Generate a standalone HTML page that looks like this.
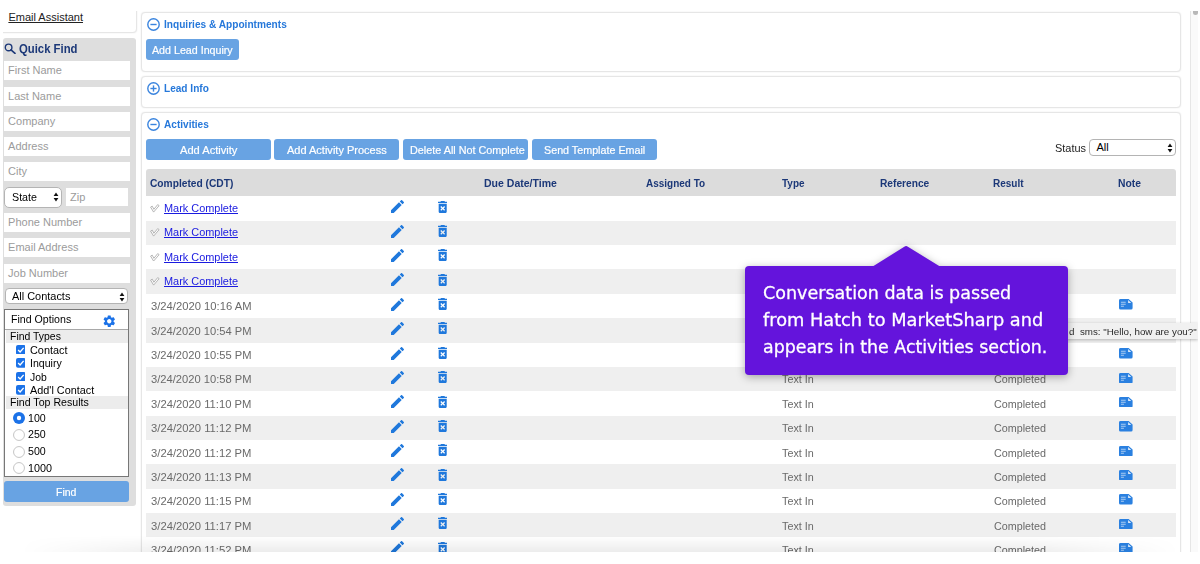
<!DOCTYPE html>
<html><head><meta charset="utf-8"><title>Activities</title>
<style>
html,body{margin:0;padding:0;background:#fff;}
body{width:1200px;height:564px;position:relative;overflow:hidden;font-family:"Liberation Sans",sans-serif;font-size:11px;color:#000;}
.abs{position:absolute;}
.t{position:absolute;white-space:nowrap;line-height:14px;font-size:11px;}
.card{position:absolute;background:#fff;border:1px solid #e6e6e6;border-radius:4px;box-shadow:0 0 1.5px rgba(0,0,0,0.10);box-sizing:border-box;}
.btn{position:absolute;background:#68a3e3;color:#fff;border-radius:3px;-webkit-text-stroke:0.2px #fff;padding-top:0.5px;text-align:center;font-size:11px;line-height:21px;height:21px;white-space:nowrap;}
.inp{position:absolute;background:#fff;height:19px;left:4.4px;width:125.7px;box-sizing:border-box;color:#9b9b9b;font-size:11px;line-height:19px;padding-left:3.7px;white-space:nowrap;}
.bt{color:#fff;font-size:11px;-webkit-text-stroke:0.2px #fff;}
.sec{color:#2678da;font-weight:bold;font-size:11px;}
.th{color:#1c3878;font-weight:bold;font-size:11px;}
.td{color:#6a6a6a;font-size:11px;}
.lnk{color:#1a1ae0;text-decoration:underline;font-size:11px;}
.row{position:absolute;left:146.3px;width:1029.7px;}
.sel{position:absolute;background:#fff;border:1px solid #b4b4b4;border-radius:4px;box-sizing:border-box;font-size:11px;}
</style></head><body>

<div class="card" style="left:-4px;top:-4px;width:140.5px;height:36.5px;"></div>
<div class="t " style="left:8.4px;top:9.6px;text-decoration:underline;color:#222;">Email Assistant</div>
<div class="abs" style="left:3px;top:38px;width:133.3px;height:467.8px;background:#dedede;border-radius:3px;"></div>
<svg class="abs" style="left:4.3px;top:42.8px" width="12" height="11" viewBox="0 0 12 11"><circle cx="4.6" cy="4.4" r="3.3" fill="none" stroke="#1c3878" stroke-width="1.4"/><path d="M7 6.8 L11 10.4" stroke="#1c3878" stroke-width="1.6" stroke-linecap="round"/></svg>
<div class="t " style="left:19.2px;top:41.0px;font-weight:bold;font-size:13px;line-height:16px;color:#1c3878;transform:scaleX(0.8709);transform-origin:0 0;">Quick Find</div>
<div class="inp" style="top:61.25px;">First Name</div>
<div class="inp" style="top:86.55px;">Last Name</div>
<div class="inp" style="top:111.85px;">Company</div>
<div class="inp" style="top:137.15px;">Address</div>
<div class="inp" style="top:162.45px;">City</div>
<div class="sel" style="left:4.3px;top:187.15px;width:58px;height:20.4px;border-radius:5px;"></div>
<div class="t " style="left:11.8px;top:189.95px;color:#000;transform:scaleX(0.9732);transform-origin:0 0;">State</div>
<svg class="abs" style="left:52.8px;top:192.35px" width="6" height="10" viewBox="0 0 6 10"><path d="M3 0.5 L5.4 4 H0.6Z M3 9.5 L5.4 6 H0.6Z" fill="#111"/></svg>
<div class="inp" style="left:66.3px;width:61.7px;top:188.25px;height:18px;line-height:18px;">Zip</div>
<div class="inp" style="top:213.05px;">Phone Number</div>
<div class="inp" style="top:238.35px;">Email Address</div>
<div class="inp" style="top:263.65px;">Job Number</div>
<div class="sel" style="left:4.5px;top:288.3px;width:123.5px;height:16px;"></div>
<div class="t " style="left:11.8px;top:288.8px;transform:scaleX(0.9948);transform-origin:0 0;">All Contacts</div>
<svg class="abs" style="left:118.5px;top:291.5px" width="6" height="10" viewBox="0 0 6 10"><path d="M3 0.5 L5.4 4 H0.6Z M3 9.5 L5.4 6 H0.6Z" fill="#111"/></svg>
<div class="abs" style="left:4.3px;top:308.7px;width:124.8px;height:168.4px;background:#fff;border:1px solid #777;box-sizing:border-box;"></div>
<div class="t " style="left:10.6px;top:312.2px;transform:scaleX(0.9651);transform-origin:0 0;">Find Options</div>
<div class="abs" style="left:5.3px;top:328.6px;width:122.8px;height:1px;background:#a8a8a8;"></div>
<div class="abs" style="left:5.5px;top:329.5px;width:122.5px;height:13px;background:#ececec;"></div>
<div class="t " style="left:9.7px;top:329px;transform:scaleX(0.9495);transform-origin:0 0;">Find Types</div>
<svg class="abs" style="left:15.6px;top:344.6px" width="9.8" height="9.8" viewBox="0 0 10 10"><rect width="10" height="10" rx="2" fill="#1b72e8"/><path d="M2.2 5.2 L4.2 7.2 L7.8 2.9" stroke="#fff" stroke-width="1.4" fill="none"/></svg>
<div class="t " style="left:29.5px;top:342.5px;transform:scaleX(0.9889);transform-origin:0 0;">Contact</div>
<svg class="abs" style="left:15.6px;top:358.1px" width="9.8" height="9.8" viewBox="0 0 10 10"><rect width="10" height="10" rx="2" fill="#1b72e8"/><path d="M2.2 5.2 L4.2 7.2 L7.8 2.9" stroke="#fff" stroke-width="1.4" fill="none"/></svg>
<div class="t " style="left:29.5px;top:356.0px;transform:scaleX(0.9612);transform-origin:0 0;">Inquiry</div>
<svg class="abs" style="left:15.6px;top:371.6px" width="9.8" height="9.8" viewBox="0 0 10 10"><rect width="10" height="10" rx="2" fill="#1b72e8"/><path d="M2.2 5.2 L4.2 7.2 L7.8 2.9" stroke="#fff" stroke-width="1.4" fill="none"/></svg>
<div class="t " style="left:29.5px;top:369.5px;transform:scaleX(0.9437);transform-origin:0 0;">Job</div>
<svg class="abs" style="left:15.6px;top:385.1px" width="9.8" height="9.8" viewBox="0 0 10 10"><rect width="10" height="10" rx="2" fill="#1b72e8"/><path d="M2.2 5.2 L4.2 7.2 L7.8 2.9" stroke="#fff" stroke-width="1.4" fill="none"/></svg>
<div class="t " style="left:29.5px;top:383.0px;transform:scaleX(0.9870);transform-origin:0 0;">Add'l Contact</div>
<div class="abs" style="left:5.5px;top:395.8px;width:122.5px;height:13.2px;background:#ececec;"></div>
<div class="t " style="left:9.7px;top:395.3px;transform:scaleX(0.9635);transform-origin:0 0;">Find Top Results</div>
<svg class="abs" style="left:13.2px;top:411.75px" width="12" height="12" viewBox="0 0 11 11"><circle cx="5.5" cy="5.5" r="5.5" fill="#1b72e8"/><circle cx="5.5" cy="5.5" r="2" fill="#fff"/></svg>
<div class="t " style="left:27.6px;top:410.55px;transform:scaleX(0.9668);transform-origin:0 0;">100</div>
<svg class="abs" style="left:13.2px;top:428.65px" width="12" height="12" viewBox="0 0 11 11"><circle cx="5.5" cy="5.5" r="5" fill="#fff" stroke="#c4c4c4" stroke-width="0.9"/></svg>
<div class="t " style="left:27.6px;top:427.45px;transform:scaleX(0.9668);transform-origin:0 0;">250</div>
<svg class="abs" style="left:13.2px;top:445.55px" width="12" height="12" viewBox="0 0 11 11"><circle cx="5.5" cy="5.5" r="5" fill="#fff" stroke="#c4c4c4" stroke-width="0.9"/></svg>
<div class="t " style="left:27.6px;top:444.35px;transform:scaleX(0.9668);transform-origin:0 0;">500</div>
<svg class="abs" style="left:13.2px;top:462.45px" width="12" height="12" viewBox="0 0 11 11"><circle cx="5.5" cy="5.5" r="5" fill="#fff" stroke="#c4c4c4" stroke-width="0.9"/></svg>
<div class="t " style="left:27.6px;top:461.25px;transform:scaleX(0.9802);transform-origin:0 0;">1000</div>
<svg class="abs" style="left:102.3px;top:313.5px" width="14.5" height="14.5" viewBox="0 0 24 24"><path fill="#1b72e8" d="M19.14 12.94c.04-.3.06-.61.06-.94 0-.32-.02-.64-.07-.94l2.03-1.58a.49.49 0 0 0 .12-.61l-1.92-3.32a.488.488 0 0 0-.59-.22l-2.39.96c-.5-.38-1.03-.7-1.62-.94l-.36-2.54a.484.484 0 0 0-.48-.41h-3.84c-.24 0-.43.17-.47.41l-.36 2.54c-.59.24-1.13.57-1.62.94l-2.39-.96c-.22-.08-.47 0-.59.22L2.74 8.87c-.12.21-.08.47.12.61l2.03 1.58c-.05.3-.09.63-.09.94s.02.64.07.94l-2.03 1.58a.49.49 0 0 0-.12.61l1.92 3.32c.12.22.37.29.59.22l2.39-.96c.5.38 1.03.7 1.62.94l.36 2.54c.05.24.24.41.48.41h3.84c.24 0 .44-.17.47-.41l.36-2.54c.59-.24 1.13-.56 1.62-.94l2.39.96c.22.08.47 0 .59-.22l1.92-3.32c.12-.22.07-.47-.12-.61l-2.01-1.58zM12 15.6c-1.98 0-3.6-1.62-3.6-3.6s1.620-3.600 3.600-3.600 3.600 1.620 3.600 3.600-1.620 3.600-3.600 3.600z"/></svg>
<div class="btn" style="left:4.3px;top:481.4px;width:124.9px;height:20.5px;"></div>
<div class="t bt" style="left:56.3px;top:484.7px;transform:scaleX(0.9530);transform-origin:0 0;">Find</div>
<div class="card" style="left:141px;top:12px;width:1040px;height:59.5px;"></div>
<div class="card" style="left:141px;top:76px;width:1040px;height:31.5px;"></div>
<div class="card" style="left:141px;top:112.3px;width:1040px;height:460px;"></div>
<div class="abs" style="left:1189.5px;top:10.5px;width:9px;height:542px;background:#fafafa;border-left:1px solid #e6e6e6;box-sizing:border-box;"></div>
<div class="abs" style="left:1193.2px;top:10.5px;width:5px;height:4px;background:#b8b8b8;border-radius:0 0 3px 3px;"></div>
<svg class="abs" style="left:147px;top:18.0px" width="13" height="13" viewBox="0 0 13 13"><circle cx="6.5" cy="6.5" r="5.7" fill="none" stroke="#3a84de" stroke-width="1.4"/><path d="M3.4 6.5 H9.6" stroke="#3a84de" stroke-width="1.4"/></svg>
<div class="t sec" style="left:164.3px;top:17.3px;transform:scaleX(0.9203);transform-origin:0 0;">Inquiries &amp; Appointments</div>
<div class="btn" style="left:146px;top:39.3px;width:92.7px;height:20.5px;"></div>
<div class="t bt" style="left:152px;top:42.5px;transform:scaleX(0.9703);transform-origin:0 0;">Add Lead Inquiry</div>
<svg class="abs" style="left:147px;top:82.0px" width="13" height="13" viewBox="0 0 13 13"><circle cx="6.5" cy="6.5" r="5.7" fill="none" stroke="#3a84de" stroke-width="1.4"/><path d="M3.4 6.5 H9.6" stroke="#3a84de" stroke-width="1.4"/><path d="M6.5 3.4 V9.6" stroke="#3a84de" stroke-width="1.4"/></svg>
<div class="t sec" style="left:164.2px;top:80.9px;transform:scaleX(0.9163);transform-origin:0 0;">Lead Info</div>
<svg class="abs" style="left:147px;top:118.0px" width="13" height="13" viewBox="0 0 13 13"><circle cx="6.5" cy="6.5" r="5.7" fill="none" stroke="#3a84de" stroke-width="1.4"/><path d="M3.4 6.5 H9.6" stroke="#3a84de" stroke-width="1.4"/></svg>
<div class="t sec" style="left:164.2px;top:116.8px;transform:scaleX(0.9157);transform-origin:0 0;">Activities</div>
<div class="btn" style="left:146px;top:139.3px;width:125.3px;height:20.6px;"></div>
<div class="t bt" style="left:180.1px;top:142.6px;transform:scaleX(1.0095);transform-origin:0 0;">Add Activity</div>
<div class="btn" style="left:274.3px;top:139.3px;width:125px;height:20.6px;"></div>
<div class="t bt" style="left:287.3px;top:142.6px;transform:scaleX(1.0004);transform-origin:0 0;">Add Activity Process</div>
<div class="btn" style="left:402.7px;top:139.3px;width:125.3px;height:20.6px;"></div>
<div class="t bt" style="left:409.5px;top:142.6px;transform:scaleX(0.9830);transform-origin:0 0;">Delete All Not Complete</div>
<div class="btn" style="left:532px;top:139.3px;width:125.3px;height:20.6px;"></div>
<div class="t bt" style="left:543.75px;top:142.6px;transform:scaleX(0.9759);transform-origin:0 0;">Send Template Email</div>
<div class="t " style="left:1055px;top:140.5px;color:#222;font-size:11.5px;transform:scaleX(0.9506);transform-origin:0 0;">Status</div>
<div class="sel" style="left:1089.3px;top:139.3px;width:86.7px;height:16.5px;"></div>
<div class="t " style="left:1096.5px;top:140.3px;">All</div>
<svg class="abs" style="left:1166.5px;top:142.8px" width="6" height="10" viewBox="0 0 6 10"><path d="M3 0.5 L5.4 4 H0.6Z M3 9.5 L5.4 6 H0.6Z" fill="#111"/></svg>
<div class="abs" style="left:146.3px;top:168.8px;width:1029.7px;height:27.5px;background:#dcdcdc;border-radius:3px 3px 0 0;"></div>
<div class="t th" style="left:150.3px;top:176.3px;transform:scaleX(0.9273);transform-origin:0 0;">Completed (CDT)</div>
<div class="t th" style="left:483.5px;top:176.3px;transform:scaleX(0.9565);transform-origin:0 0;">Due Date/Time</div>
<div class="t th" style="left:646.4px;top:176.3px;transform:scaleX(0.9064);transform-origin:0 0;">Assigned To</div>
<div class="t th" style="left:782px;top:176.3px;transform:scaleX(0.9051);transform-origin:0 0;">Type</div>
<div class="t th" style="left:880px;top:176.3px;transform:scaleX(0.9266);transform-origin:0 0;">Reference</div>
<div class="t th" style="left:992.7px;top:176.3px;transform:scaleX(0.9100);transform-origin:0 0;">Result</div>
<div class="t th" style="left:1117.7px;top:176.3px;transform:scaleX(0.9406);transform-origin:0 0;">Note</div>
<div class="row" style="top:196.30px;height:24.47px;background:#fff;"></div>
<svg class="abs" style="left:150.1px;top:204.10px" width="9.6" height="8.6" viewBox="0 0 9.6 8.6"><path d="M0.600 3.100 L2.200 2.100 L3.900 5.300 L7.700 0.600 L9.100 1.700 L3.600 8.100 Z" fill="#fff" stroke="#a4a4a4" stroke-width="0.8" stroke-linejoin="round"/></svg>
<div class="t lnk" style="left:163.6px;top:200.80px;transform:scaleX(0.9922);transform-origin:0 0;">Mark Complete</div>
<svg class="abs" style="left:391.0px;top:200.30px" width="13" height="13" viewBox="3 3 18 18"><path fill="#1f78dc" d="M3 17.25V21h3.750L17.810 9.940l-3.750-3.750L3 17.250zM20.710 7.040a.996.996 0 0 0 0-1.410l-2.340-2.340a.996.996 0 0 0-1.410 0l-1.830 1.830 3.750 3.750 1.830-1.830z"/></svg>
<svg class="abs" style="left:437.5px;top:200.60px" width="9.4" height="12.1" viewBox="5 3 14 18"><path fill="#1f78dc" d="M6 19c0 1.100.900 2 2 2h8c1.100 0 2-.900 2-2V7H6v12zm2.460-7.120l1.410-1.410L12 12.590l2.120-2.120 1.410 1.410L13.410 14l2.120 2.120-1.410 1.410L12 15.410l-2.120 2.120-1.410-1.410L10.590 14l-2.130-2.120zM15.500 4l-1-1h-5l-1 1H5v2h14V4z"/></svg>
<div class="row" style="top:220.67px;height:24.47px;background:#efefef;"></div>
<svg class="abs" style="left:150.1px;top:228.47px" width="9.6" height="8.6" viewBox="0 0 9.6 8.6"><path d="M0.600 3.100 L2.200 2.100 L3.900 5.300 L7.700 0.600 L9.100 1.700 L3.600 8.100 Z" fill="#fff" stroke="#a4a4a4" stroke-width="0.8" stroke-linejoin="round"/></svg>
<div class="t lnk" style="left:163.6px;top:225.17px;transform:scaleX(0.9922);transform-origin:0 0;">Mark Complete</div>
<svg class="abs" style="left:391.0px;top:224.67px" width="13" height="13" viewBox="3 3 18 18"><path fill="#1f78dc" d="M3 17.25V21h3.750L17.810 9.940l-3.750-3.750L3 17.250zM20.710 7.040a.996.996 0 0 0 0-1.410l-2.340-2.340a.996.996 0 0 0-1.410 0l-1.830 1.830 3.750 3.750 1.830-1.830z"/></svg>
<svg class="abs" style="left:437.5px;top:224.97px" width="9.4" height="12.1" viewBox="5 3 14 18"><path fill="#1f78dc" d="M6 19c0 1.100.900 2 2 2h8c1.100 0 2-.900 2-2V7H6v12zm2.460-7.120l1.410-1.410L12 12.590l2.120-2.120 1.410 1.410L13.410 14l2.120 2.120-1.410 1.410L12 15.410l-2.120 2.120-1.410-1.410L10.590 14l-2.130-2.120zM15.500 4l-1-1h-5l-1 1H5v2h14V4z"/></svg>
<div class="row" style="top:245.04px;height:24.47px;background:#fff;"></div>
<svg class="abs" style="left:150.1px;top:252.84px" width="9.6" height="8.6" viewBox="0 0 9.6 8.6"><path d="M0.600 3.100 L2.200 2.100 L3.900 5.300 L7.700 0.600 L9.100 1.700 L3.600 8.100 Z" fill="#fff" stroke="#a4a4a4" stroke-width="0.8" stroke-linejoin="round"/></svg>
<div class="t lnk" style="left:163.6px;top:249.54px;transform:scaleX(0.9922);transform-origin:0 0;">Mark Complete</div>
<svg class="abs" style="left:391.0px;top:249.04px" width="13" height="13" viewBox="3 3 18 18"><path fill="#1f78dc" d="M3 17.25V21h3.750L17.810 9.940l-3.750-3.750L3 17.250zM20.710 7.040a.996.996 0 0 0 0-1.410l-2.340-2.340a.996.996 0 0 0-1.410 0l-1.830 1.830 3.750 3.750 1.830-1.830z"/></svg>
<svg class="abs" style="left:437.5px;top:249.34px" width="9.4" height="12.1" viewBox="5 3 14 18"><path fill="#1f78dc" d="M6 19c0 1.100.900 2 2 2h8c1.100 0 2-.900 2-2V7H6v12zm2.460-7.120l1.410-1.410L12 12.590l2.120-2.120 1.410 1.410L13.410 14l2.120 2.120-1.410 1.410L12 15.410l-2.120 2.120-1.410-1.410L10.590 14l-2.130-2.120zM15.500 4l-1-1h-5l-1 1H5v2h14V4z"/></svg>
<div class="row" style="top:269.41px;height:24.47px;background:#efefef;"></div>
<svg class="abs" style="left:150.1px;top:277.21px" width="9.6" height="8.6" viewBox="0 0 9.6 8.6"><path d="M0.600 3.100 L2.200 2.100 L3.900 5.300 L7.700 0.600 L9.100 1.700 L3.600 8.100 Z" fill="#fff" stroke="#a4a4a4" stroke-width="0.8" stroke-linejoin="round"/></svg>
<div class="t lnk" style="left:163.6px;top:273.91px;transform:scaleX(0.9922);transform-origin:0 0;">Mark Complete</div>
<svg class="abs" style="left:391.0px;top:273.41px" width="13" height="13" viewBox="3 3 18 18"><path fill="#1f78dc" d="M3 17.25V21h3.750L17.810 9.940l-3.750-3.750L3 17.250zM20.710 7.040a.996.996 0 0 0 0-1.410l-2.340-2.340a.996.996 0 0 0-1.410 0l-1.830 1.830 3.750 3.750 1.830-1.830z"/></svg>
<svg class="abs" style="left:437.5px;top:273.71px" width="9.4" height="12.1" viewBox="5 3 14 18"><path fill="#1f78dc" d="M6 19c0 1.100.900 2 2 2h8c1.100 0 2-.900 2-2V7H6v12zm2.460-7.120l1.410-1.410L12 12.590l2.120-2.120 1.410 1.410L13.410 14l2.120 2.120-1.410 1.410L12 15.410l-2.120 2.120-1.410-1.410L10.590 14l-2.130-2.120zM15.500 4l-1-1h-5l-1 1H5v2h14V4z"/></svg>
<div class="row" style="top:293.78px;height:24.47px;background:#fff;"></div>
<div class="t td" style="left:150.8px;top:299.28px;transform:scaleX(1.0206);transform-origin:0 0;">3/24/2020 10:16 AM</div>
<div class="t td" style="left:782px;top:299.28px;transform:scaleX(0.9797);transform-origin:0 0;">Text In</div>
<div class="t td" style="left:993.7px;top:299.28px;transform:scaleX(0.9774);transform-origin:0 0;">Completed</div>
<svg class="abs" style="left:1119px;top:299.48px" width="13.6" height="10.4" viewBox="0 0 13.6 10.4"><path fill="#2a80e0" d="M1.500 0 H9.600 L13.600 3.600 V8.900 a1.500 1.500 0 0 1 -1.500 1.500 H1.500 a1.500 1.500 0 0 1 -1.500 -1.500 V1.500 a1.500 1.500 0 0 1 1.500 -1.500z"/><path fill="#fff" d="M9.100 1 L12.300 3.900 H9.100z" opacity="0.85"/><path fill="#fff" d="M1.900 2.700 H6.700 V3.800 H1.900z M1.900 4.700 H6.700 V5.800 H1.900z M1.900 6.700 H4.900 V7.800 H1.900z" opacity="0.6"/></svg>
<svg class="abs" style="left:391.0px;top:297.78px" width="13" height="13" viewBox="3 3 18 18"><path fill="#1f78dc" d="M3 17.25V21h3.750L17.810 9.940l-3.750-3.750L3 17.250zM20.710 7.040a.996.996 0 0 0 0-1.410l-2.340-2.340a.996.996 0 0 0-1.410 0l-1.830 1.830 3.750 3.750 1.830-1.830z"/></svg>
<svg class="abs" style="left:437.5px;top:298.08px" width="9.4" height="12.1" viewBox="5 3 14 18"><path fill="#1f78dc" d="M6 19c0 1.100.900 2 2 2h8c1.100 0 2-.900 2-2V7H6v12zm2.460-7.120l1.410-1.410L12 12.590l2.120-2.120 1.410 1.410L13.410 14l2.120 2.120-1.410 1.410L12 15.410l-2.120 2.120-1.410-1.410L10.590 14l-2.130-2.120zM15.500 4l-1-1h-5l-1 1H5v2h14V4z"/></svg>
<div class="row" style="top:318.15px;height:24.47px;background:#efefef;"></div>
<div class="t td" style="left:150.8px;top:323.65px;transform:scaleX(1.0144);transform-origin:0 0;">3/24/2020 10:54 PM</div>
<div class="t td" style="left:782px;top:323.65px;transform:scaleX(0.9797);transform-origin:0 0;">Text In</div>
<div class="t td" style="left:993.7px;top:323.65px;transform:scaleX(0.9774);transform-origin:0 0;">Completed</div>
<svg class="abs" style="left:1119px;top:323.85px" width="13.6" height="10.4" viewBox="0 0 13.6 10.4"><path fill="#2a80e0" d="M1.500 0 H9.600 L13.600 3.600 V8.900 a1.500 1.500 0 0 1 -1.500 1.500 H1.500 a1.500 1.500 0 0 1 -1.500 -1.500 V1.500 a1.500 1.500 0 0 1 1.500 -1.500z"/><path fill="#fff" d="M9.100 1 L12.300 3.900 H9.100z" opacity="0.85"/><path fill="#fff" d="M1.900 2.700 H6.700 V3.800 H1.900z M1.900 4.700 H6.700 V5.800 H1.900z M1.900 6.700 H4.900 V7.800 H1.900z" opacity="0.6"/></svg>
<svg class="abs" style="left:391.0px;top:322.15px" width="13" height="13" viewBox="3 3 18 18"><path fill="#1f78dc" d="M3 17.25V21h3.750L17.810 9.940l-3.750-3.750L3 17.250zM20.710 7.040a.996.996 0 0 0 0-1.410l-2.340-2.340a.996.996 0 0 0-1.410 0l-1.830 1.830 3.750 3.750 1.830-1.830z"/></svg>
<svg class="abs" style="left:437.5px;top:322.45px" width="9.4" height="12.1" viewBox="5 3 14 18"><path fill="#1f78dc" d="M6 19c0 1.100.900 2 2 2h8c1.100 0 2-.900 2-2V7H6v12zm2.460-7.120l1.410-1.410L12 12.590l2.120-2.120 1.410 1.410L13.410 14l2.120 2.120-1.410 1.410L12 15.410l-2.120 2.120-1.410-1.410L10.590 14l-2.130-2.120zM15.500 4l-1-1h-5l-1 1H5v2h14V4z"/></svg>
<div class="row" style="top:342.52px;height:24.47px;background:#fff;"></div>
<div class="t td" style="left:150.8px;top:348.02px;transform:scaleX(1.0144);transform-origin:0 0;">3/24/2020 10:55 PM</div>
<div class="t td" style="left:782px;top:348.02px;transform:scaleX(0.9797);transform-origin:0 0;">Text In</div>
<div class="t td" style="left:993.7px;top:348.02px;transform:scaleX(0.9774);transform-origin:0 0;">Completed</div>
<svg class="abs" style="left:1119px;top:348.22px" width="13.6" height="10.4" viewBox="0 0 13.6 10.4"><path fill="#2a80e0" d="M1.500 0 H9.600 L13.600 3.600 V8.900 a1.500 1.500 0 0 1 -1.500 1.500 H1.500 a1.500 1.500 0 0 1 -1.500 -1.500 V1.500 a1.500 1.500 0 0 1 1.500 -1.500z"/><path fill="#fff" d="M9.100 1 L12.300 3.900 H9.100z" opacity="0.85"/><path fill="#fff" d="M1.900 2.700 H6.700 V3.800 H1.900z M1.900 4.700 H6.700 V5.800 H1.900z M1.900 6.700 H4.900 V7.800 H1.900z" opacity="0.6"/></svg>
<svg class="abs" style="left:391.0px;top:346.52px" width="13" height="13" viewBox="3 3 18 18"><path fill="#1f78dc" d="M3 17.25V21h3.750L17.810 9.940l-3.750-3.750L3 17.250zM20.710 7.040a.996.996 0 0 0 0-1.410l-2.340-2.340a.996.996 0 0 0-1.410 0l-1.830 1.830 3.750 3.750 1.830-1.830z"/></svg>
<svg class="abs" style="left:437.5px;top:346.82px" width="9.4" height="12.1" viewBox="5 3 14 18"><path fill="#1f78dc" d="M6 19c0 1.100.900 2 2 2h8c1.100 0 2-.900 2-2V7H6v12zm2.460-7.120l1.410-1.410L12 12.590l2.120-2.120 1.410 1.410L13.410 14l2.120 2.120-1.410 1.410L12 15.410l-2.120 2.120-1.410-1.410L10.590 14l-2.130-2.120zM15.500 4l-1-1h-5l-1 1H5v2h14V4z"/></svg>
<div class="row" style="top:366.89px;height:24.47px;background:#efefef;"></div>
<div class="t td" style="left:150.8px;top:372.39px;transform:scaleX(1.0144);transform-origin:0 0;">3/24/2020 10:58 PM</div>
<div class="t td" style="left:782px;top:372.39px;transform:scaleX(0.9797);transform-origin:0 0;">Text In</div>
<div class="t td" style="left:993.7px;top:372.39px;transform:scaleX(0.9774);transform-origin:0 0;">Completed</div>
<svg class="abs" style="left:1119px;top:372.59px" width="13.6" height="10.4" viewBox="0 0 13.6 10.4"><path fill="#2a80e0" d="M1.500 0 H9.600 L13.600 3.600 V8.900 a1.500 1.500 0 0 1 -1.500 1.500 H1.500 a1.500 1.500 0 0 1 -1.500 -1.500 V1.500 a1.500 1.500 0 0 1 1.500 -1.500z"/><path fill="#fff" d="M9.100 1 L12.300 3.900 H9.100z" opacity="0.85"/><path fill="#fff" d="M1.900 2.700 H6.700 V3.800 H1.900z M1.900 4.700 H6.700 V5.800 H1.900z M1.900 6.700 H4.900 V7.800 H1.900z" opacity="0.6"/></svg>
<svg class="abs" style="left:391.0px;top:370.89px" width="13" height="13" viewBox="3 3 18 18"><path fill="#1f78dc" d="M3 17.25V21h3.750L17.810 9.940l-3.750-3.750L3 17.250zM20.710 7.040a.996.996 0 0 0 0-1.410l-2.340-2.340a.996.996 0 0 0-1.410 0l-1.830 1.830 3.750 3.750 1.830-1.830z"/></svg>
<svg class="abs" style="left:437.5px;top:371.19px" width="9.4" height="12.1" viewBox="5 3 14 18"><path fill="#1f78dc" d="M6 19c0 1.100.900 2 2 2h8c1.100 0 2-.900 2-2V7H6v12zm2.460-7.120l1.410-1.410L12 12.590l2.120-2.120 1.410 1.410L13.410 14l2.120 2.120-1.410 1.410L12 15.410l-2.120 2.120-1.410-1.410L10.590 14l-2.130-2.120zM15.500 4l-1-1h-5l-1 1H5v2h14V4z"/></svg>
<div class="row" style="top:391.26px;height:24.47px;background:#fff;"></div>
<div class="t td" style="left:150.8px;top:396.76px;transform:scaleX(1.0227);transform-origin:0 0;">3/24/2020 11:10 PM</div>
<div class="t td" style="left:782px;top:396.76px;transform:scaleX(0.9797);transform-origin:0 0;">Text In</div>
<div class="t td" style="left:993.7px;top:396.76px;transform:scaleX(0.9774);transform-origin:0 0;">Completed</div>
<svg class="abs" style="left:1119px;top:396.96px" width="13.6" height="10.4" viewBox="0 0 13.6 10.4"><path fill="#2a80e0" d="M1.500 0 H9.600 L13.600 3.600 V8.900 a1.500 1.500 0 0 1 -1.500 1.500 H1.500 a1.500 1.500 0 0 1 -1.500 -1.500 V1.500 a1.500 1.500 0 0 1 1.500 -1.500z"/><path fill="#fff" d="M9.100 1 L12.300 3.900 H9.100z" opacity="0.85"/><path fill="#fff" d="M1.900 2.700 H6.700 V3.800 H1.900z M1.900 4.700 H6.700 V5.800 H1.900z M1.900 6.700 H4.900 V7.800 H1.900z" opacity="0.6"/></svg>
<svg class="abs" style="left:391.0px;top:395.26px" width="13" height="13" viewBox="3 3 18 18"><path fill="#1f78dc" d="M3 17.25V21h3.750L17.810 9.940l-3.750-3.750L3 17.250zM20.710 7.040a.996.996 0 0 0 0-1.410l-2.340-2.340a.996.996 0 0 0-1.410 0l-1.830 1.830 3.750 3.750 1.830-1.830z"/></svg>
<svg class="abs" style="left:437.5px;top:395.56px" width="9.4" height="12.1" viewBox="5 3 14 18"><path fill="#1f78dc" d="M6 19c0 1.100.900 2 2 2h8c1.100 0 2-.900 2-2V7H6v12zm2.460-7.120l1.410-1.410L12 12.590l2.120-2.120 1.410 1.410L13.410 14l2.120 2.120-1.410 1.410L12 15.410l-2.120 2.120-1.410-1.410L10.590 14l-2.130-2.120zM15.500 4l-1-1h-5l-1 1H5v2h14V4z"/></svg>
<div class="row" style="top:415.63px;height:24.47px;background:#efefef;"></div>
<div class="t td" style="left:150.8px;top:421.13px;transform:scaleX(1.0227);transform-origin:0 0;">3/24/2020 11:12 PM</div>
<div class="t td" style="left:782px;top:421.13px;transform:scaleX(0.9797);transform-origin:0 0;">Text In</div>
<div class="t td" style="left:993.7px;top:421.13px;transform:scaleX(0.9774);transform-origin:0 0;">Completed</div>
<svg class="abs" style="left:1119px;top:421.33px" width="13.6" height="10.4" viewBox="0 0 13.6 10.4"><path fill="#2a80e0" d="M1.500 0 H9.600 L13.600 3.600 V8.900 a1.500 1.500 0 0 1 -1.500 1.500 H1.500 a1.500 1.500 0 0 1 -1.500 -1.500 V1.500 a1.500 1.500 0 0 1 1.500 -1.500z"/><path fill="#fff" d="M9.100 1 L12.300 3.900 H9.100z" opacity="0.85"/><path fill="#fff" d="M1.900 2.700 H6.700 V3.800 H1.900z M1.900 4.700 H6.700 V5.800 H1.900z M1.900 6.700 H4.900 V7.800 H1.900z" opacity="0.6"/></svg>
<svg class="abs" style="left:391.0px;top:419.63px" width="13" height="13" viewBox="3 3 18 18"><path fill="#1f78dc" d="M3 17.25V21h3.750L17.810 9.940l-3.750-3.750L3 17.250zM20.710 7.040a.996.996 0 0 0 0-1.410l-2.340-2.340a.996.996 0 0 0-1.410 0l-1.830 1.830 3.750 3.750 1.830-1.830z"/></svg>
<svg class="abs" style="left:437.5px;top:419.93px" width="9.4" height="12.1" viewBox="5 3 14 18"><path fill="#1f78dc" d="M6 19c0 1.100.900 2 2 2h8c1.100 0 2-.900 2-2V7H6v12zm2.460-7.120l1.410-1.410L12 12.590l2.120-2.120 1.410 1.410L13.410 14l2.120 2.120-1.410 1.410L12 15.410l-2.120 2.120-1.410-1.410L10.590 14l-2.130-2.120zM15.500 4l-1-1h-5l-1 1H5v2h14V4z"/></svg>
<div class="row" style="top:440.00px;height:24.47px;background:#fff;"></div>
<div class="t td" style="left:150.8px;top:445.50px;transform:scaleX(1.0227);transform-origin:0 0;">3/24/2020 11:12 PM</div>
<div class="t td" style="left:782px;top:445.50px;transform:scaleX(0.9797);transform-origin:0 0;">Text In</div>
<div class="t td" style="left:993.7px;top:445.50px;transform:scaleX(0.9774);transform-origin:0 0;">Completed</div>
<svg class="abs" style="left:1119px;top:445.70px" width="13.6" height="10.4" viewBox="0 0 13.6 10.4"><path fill="#2a80e0" d="M1.500 0 H9.600 L13.600 3.600 V8.900 a1.500 1.500 0 0 1 -1.500 1.500 H1.500 a1.500 1.500 0 0 1 -1.500 -1.500 V1.500 a1.500 1.500 0 0 1 1.500 -1.500z"/><path fill="#fff" d="M9.100 1 L12.300 3.900 H9.100z" opacity="0.85"/><path fill="#fff" d="M1.900 2.700 H6.700 V3.800 H1.900z M1.900 4.700 H6.700 V5.800 H1.900z M1.900 6.700 H4.900 V7.800 H1.900z" opacity="0.6"/></svg>
<svg class="abs" style="left:391.0px;top:444.00px" width="13" height="13" viewBox="3 3 18 18"><path fill="#1f78dc" d="M3 17.25V21h3.750L17.810 9.940l-3.750-3.750L3 17.250zM20.710 7.040a.996.996 0 0 0 0-1.410l-2.340-2.340a.996.996 0 0 0-1.410 0l-1.830 1.830 3.750 3.750 1.830-1.830z"/></svg>
<svg class="abs" style="left:437.5px;top:444.30px" width="9.4" height="12.1" viewBox="5 3 14 18"><path fill="#1f78dc" d="M6 19c0 1.100.900 2 2 2h8c1.100 0 2-.900 2-2V7H6v12zm2.460-7.120l1.410-1.410L12 12.590l2.120-2.120 1.410 1.410L13.410 14l2.120 2.120-1.410 1.410L12 15.410l-2.120 2.120-1.410-1.410L10.590 14l-2.130-2.120zM15.500 4l-1-1h-5l-1 1H5v2h14V4z"/></svg>
<div class="row" style="top:464.37px;height:24.47px;background:#efefef;"></div>
<div class="t td" style="left:150.8px;top:469.87px;transform:scaleX(1.0227);transform-origin:0 0;">3/24/2020 11:13 PM</div>
<div class="t td" style="left:782px;top:469.87px;transform:scaleX(0.9797);transform-origin:0 0;">Text In</div>
<div class="t td" style="left:993.7px;top:469.87px;transform:scaleX(0.9774);transform-origin:0 0;">Completed</div>
<svg class="abs" style="left:1119px;top:470.07px" width="13.6" height="10.4" viewBox="0 0 13.6 10.4"><path fill="#2a80e0" d="M1.500 0 H9.600 L13.600 3.600 V8.900 a1.500 1.500 0 0 1 -1.500 1.500 H1.500 a1.500 1.500 0 0 1 -1.500 -1.500 V1.500 a1.500 1.500 0 0 1 1.500 -1.500z"/><path fill="#fff" d="M9.100 1 L12.300 3.900 H9.100z" opacity="0.85"/><path fill="#fff" d="M1.900 2.700 H6.700 V3.800 H1.900z M1.900 4.700 H6.700 V5.800 H1.900z M1.900 6.700 H4.900 V7.800 H1.900z" opacity="0.6"/></svg>
<svg class="abs" style="left:391.0px;top:468.37px" width="13" height="13" viewBox="3 3 18 18"><path fill="#1f78dc" d="M3 17.25V21h3.750L17.810 9.940l-3.750-3.750L3 17.250zM20.710 7.040a.996.996 0 0 0 0-1.410l-2.340-2.340a.996.996 0 0 0-1.410 0l-1.830 1.830 3.750 3.750 1.830-1.830z"/></svg>
<svg class="abs" style="left:437.5px;top:468.67px" width="9.4" height="12.1" viewBox="5 3 14 18"><path fill="#1f78dc" d="M6 19c0 1.100.900 2 2 2h8c1.100 0 2-.900 2-2V7H6v12zm2.460-7.120l1.410-1.410L12 12.590l2.120-2.120 1.410 1.410L13.410 14l2.120 2.120-1.410 1.410L12 15.410l-2.120 2.120-1.410-1.410L10.590 14l-2.130-2.120zM15.500 4l-1-1h-5l-1 1H5v2h14V4z"/></svg>
<div class="row" style="top:488.74px;height:24.47px;background:#fff;"></div>
<div class="t td" style="left:150.8px;top:494.24px;transform:scaleX(1.0227);transform-origin:0 0;">3/24/2020 11:15 PM</div>
<div class="t td" style="left:782px;top:494.24px;transform:scaleX(0.9797);transform-origin:0 0;">Text In</div>
<div class="t td" style="left:993.7px;top:494.24px;transform:scaleX(0.9774);transform-origin:0 0;">Completed</div>
<svg class="abs" style="left:1119px;top:494.44px" width="13.6" height="10.4" viewBox="0 0 13.6 10.4"><path fill="#2a80e0" d="M1.500 0 H9.600 L13.600 3.600 V8.900 a1.500 1.500 0 0 1 -1.500 1.500 H1.500 a1.500 1.500 0 0 1 -1.500 -1.500 V1.500 a1.500 1.500 0 0 1 1.500 -1.500z"/><path fill="#fff" d="M9.100 1 L12.300 3.900 H9.100z" opacity="0.85"/><path fill="#fff" d="M1.900 2.700 H6.700 V3.800 H1.900z M1.900 4.700 H6.700 V5.800 H1.900z M1.900 6.700 H4.900 V7.800 H1.900z" opacity="0.6"/></svg>
<svg class="abs" style="left:391.0px;top:492.74px" width="13" height="13" viewBox="3 3 18 18"><path fill="#1f78dc" d="M3 17.25V21h3.750L17.810 9.940l-3.750-3.750L3 17.250zM20.710 7.040a.996.996 0 0 0 0-1.410l-2.340-2.340a.996.996 0 0 0-1.410 0l-1.830 1.830 3.750 3.750 1.830-1.830z"/></svg>
<svg class="abs" style="left:437.5px;top:493.04px" width="9.4" height="12.1" viewBox="5 3 14 18"><path fill="#1f78dc" d="M6 19c0 1.100.900 2 2 2h8c1.100 0 2-.900 2-2V7H6v12zm2.460-7.120l1.410-1.410L12 12.590l2.120-2.120 1.410 1.410L13.410 14l2.120 2.120-1.410 1.410L12 15.410l-2.120 2.120-1.410-1.410L10.590 14l-2.130-2.120zM15.500 4l-1-1h-5l-1 1H5v2h14V4z"/></svg>
<div class="row" style="top:513.11px;height:24.47px;background:#efefef;"></div>
<div class="t td" style="left:150.8px;top:518.61px;transform:scaleX(1.0227);transform-origin:0 0;">3/24/2020 11:17 PM</div>
<div class="t td" style="left:782px;top:518.61px;transform:scaleX(0.9797);transform-origin:0 0;">Text In</div>
<div class="t td" style="left:993.7px;top:518.61px;transform:scaleX(0.9774);transform-origin:0 0;">Completed</div>
<svg class="abs" style="left:1119px;top:518.81px" width="13.6" height="10.4" viewBox="0 0 13.6 10.4"><path fill="#2a80e0" d="M1.500 0 H9.600 L13.600 3.600 V8.900 a1.500 1.500 0 0 1 -1.500 1.500 H1.500 a1.500 1.500 0 0 1 -1.500 -1.500 V1.500 a1.500 1.500 0 0 1 1.500 -1.500z"/><path fill="#fff" d="M9.100 1 L12.300 3.900 H9.100z" opacity="0.85"/><path fill="#fff" d="M1.900 2.700 H6.700 V3.800 H1.900z M1.900 4.700 H6.700 V5.800 H1.900z M1.900 6.700 H4.900 V7.800 H1.900z" opacity="0.6"/></svg>
<svg class="abs" style="left:391.0px;top:517.11px" width="13" height="13" viewBox="3 3 18 18"><path fill="#1f78dc" d="M3 17.25V21h3.750L17.810 9.940l-3.750-3.750L3 17.250zM20.710 7.040a.996.996 0 0 0 0-1.410l-2.340-2.340a.996.996 0 0 0-1.410 0l-1.830 1.830 3.750 3.750 1.830-1.830z"/></svg>
<svg class="abs" style="left:437.5px;top:517.41px" width="9.4" height="12.1" viewBox="5 3 14 18"><path fill="#1f78dc" d="M6 19c0 1.100.900 2 2 2h8c1.100 0 2-.900 2-2V7H6v12zm2.460-7.120l1.410-1.410L12 12.590l2.120-2.120 1.410 1.410L13.410 14l2.120 2.120-1.410 1.410L12 15.410l-2.120 2.120-1.410-1.410L10.590 14l-2.130-2.120zM15.500 4l-1-1h-5l-1 1H5v2h14V4z"/></svg>
<div class="row" style="top:537.48px;height:24.47px;background:#fff;"></div>
<div class="t td" style="left:150.8px;top:542.98px;transform:scaleX(1.0227);transform-origin:0 0;">3/24/2020 11:52 PM</div>
<div class="t td" style="left:782px;top:542.98px;transform:scaleX(0.9797);transform-origin:0 0;">Text In</div>
<div class="t td" style="left:993.7px;top:542.98px;transform:scaleX(0.9774);transform-origin:0 0;">Completed</div>
<svg class="abs" style="left:1119px;top:543.18px" width="13.6" height="10.4" viewBox="0 0 13.6 10.4"><path fill="#2a80e0" d="M1.500 0 H9.600 L13.600 3.600 V8.900 a1.500 1.500 0 0 1 -1.500 1.500 H1.500 a1.500 1.500 0 0 1 -1.500 -1.500 V1.500 a1.500 1.500 0 0 1 1.500 -1.500z"/><path fill="#fff" d="M9.100 1 L12.300 3.900 H9.100z" opacity="0.85"/><path fill="#fff" d="M1.900 2.700 H6.700 V3.800 H1.900z M1.900 4.700 H6.700 V5.800 H1.900z M1.900 6.700 H4.900 V7.800 H1.900z" opacity="0.6"/></svg>
<svg class="abs" style="left:391.0px;top:541.48px" width="13" height="13" viewBox="3 3 18 18"><path fill="#1f78dc" d="M3 17.25V21h3.750L17.810 9.940l-3.750-3.750L3 17.250zM20.710 7.040a.996.996 0 0 0 0-1.410l-2.340-2.340a.996.996 0 0 0-1.410 0l-1.830 1.830 3.750 3.750 1.830-1.830z"/></svg>
<svg class="abs" style="left:437.5px;top:541.78px" width="9.4" height="12.1" viewBox="5 3 14 18"><path fill="#1f78dc" d="M6 19c0 1.100.900 2 2 2h8c1.100 0 2-.900 2-2V7H6v12zm2.460-7.120l1.410-1.410L12 12.590l2.120-2.120 1.410 1.410L13.410 14l2.120 2.120-1.410 1.410L12 15.410l-2.120 2.120-1.410-1.410L10.590 14l-2.130-2.120zM15.500 4l-1-1h-5l-1 1H5v2h14V4z"/></svg>
<div class="abs" style="left:1066px;top:323.4px;width:132px;height:16px;background:#f1f1f1;box-shadow:0 1px 3px rgba(0,0,0,0.25);"></div>
<div class="t " style="left:1068.5px;top:324.5px;font-size:9.5px;color:#2a2a2a;transform:scaleX(1.0301);transform-origin:0 0;">d&nbsp; sms: "Hello, how are you?"</div>
<div class="abs" style="left:0;top:0;width:1200px;height:564px;filter:drop-shadow(0 2px 4px rgba(0,0,0,0.32));"><div class="abs" style="left:744.6px;top:266.3px;width:323.2px;height:108.3px;background:#6414dc;border-radius:4px;"></div><svg class="abs" style="left:870px;top:244px" width="73" height="24" viewBox="0 0 73 24"><path d="M2.300 22.800 L34.300 2.700 Q36.100 1.500 37.900 2.700 L70.400 22.800z" fill="#6414dc"/></svg></div>
<div class="t " style="left:763px;top:278.9px;color:#fff;font-family:DejaVu Sans,Liberation Sans,sans-serif;font-size:18px;line-height:27px;-webkit-text-stroke:0.3px #fff;transform:scaleX(0.9740);transform-origin:0 0;">Conversation data is passed</div>
<div class="t " style="left:763px;top:305.9px;color:#fff;font-family:DejaVu Sans,Liberation Sans,sans-serif;font-size:18px;line-height:27px;-webkit-text-stroke:0.3px #fff;transform:scaleX(0.9859);transform-origin:0 0;">from Hatch to MarketSharp and</div>
<div class="t " style="left:763px;top:332.9px;color:#fff;font-family:DejaVu Sans,Liberation Sans,sans-serif;font-size:18px;line-height:27px;-webkit-text-stroke:0.3px #fff;transform:scaleX(0.9664);transform-origin:0 0;">appears in the Activities section.</div>
<div class="abs" style="left:20px;top:536px;width:1160px;height:16px;background:linear-gradient(to bottom, rgba(0,0,0,0), rgba(0,0,0,0.075));-webkit-mask-image:linear-gradient(to right, transparent 0, #000 14%, #000 86%, transparent 100%);mask-image:linear-gradient(to right, transparent 0, #000 14%, #000 86%, transparent 100%);"></div>
<div class="abs" style="left:0;top:552px;width:1200px;height:12px;background:#fff;"></div>
<div class="abs" style="left:1198px;top:0;width:2px;height:564px;background:#fff;"></div>
<div class="abs" style="left:0;top:0;width:1200px;height:10.5px;background:#fff;"></div>
<div class="abs" style="left:0;top:0;width:2.5px;height:564px;background:#fff;"></div>
</body></html>
